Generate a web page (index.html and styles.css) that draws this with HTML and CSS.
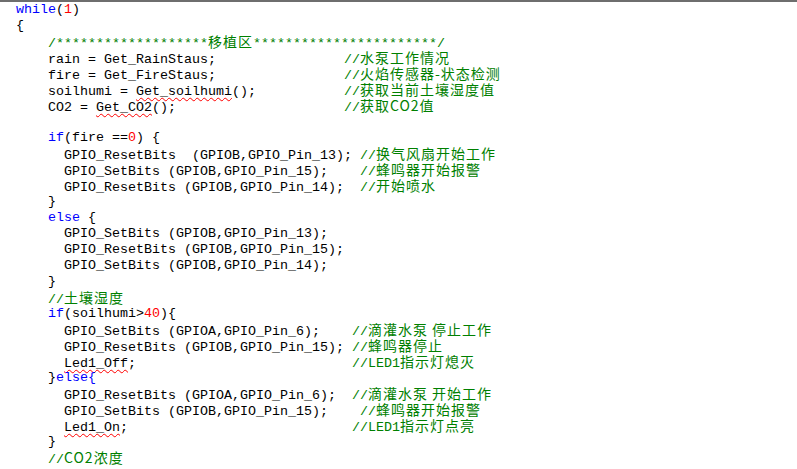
FILE: index.html
```html
<!DOCTYPE html>
<html lang="zh-CN">
<head>
  <meta charset="UTF-8">
  <meta name="viewport" content="width=device-width, initial-scale=1.0">
  <title>main.c</title>
  <link rel="stylesheet" href="styles.css">
</head>
<body>
  <div class="editor">
    <div class="line"><span class="kw">while</span>(<span class="num">1</span>)</div>
    <div class="line">{</div>
    <div class="line"><span class="cm">    /*******************<span class="zh">移植区</span>***********************/</span></div>
    <div class="line">    rain = Get_RainStaus;                <span class="cm">//<span class="zh">水泵工作情况</span></span></div>
    <div class="line">    fire = Get_FireStaus;                <span class="cm">//<span class="zh">火焰传感器-状态检测</span></span></div>
    <div class="line">    soilhumi = <span class="err">Get_soilhumi</span>();           <span class="cm">//<span class="zh">获取当前土壤湿度值</span></span></div>
    <div class="line">    CO2 = <span class="err">Get_CO2</span>();                     <span class="cm">//<span class="zh">获取CO2值</span></span></div>
    <div class="line"> </div>
    <div class="line">    <span class="kw">if</span>(fire ==<span class="num">0</span>) {</div>
    <div class="line">      GPIO_ResetBits  (GPIOB,GPIO_Pin_13); <span class="cm">//<span class="zh">换气风扇开始工作</span></span></div>
    <div class="line">      GPIO_SetBits (GPIOB,GPIO_Pin_15);    <span class="cm">//<span class="zh">蜂鸣器开始报警</span></span></div>
    <div class="line">      GPIO_ResetBits (GPIOB,GPIO_Pin_14);  <span class="cm">//<span class="zh">开始喷水</span></span></div>
    <div class="line">    }</div>
    <div class="line">    <span class="kw">else</span> {</div>
    <div class="line">      GPIO_SetBits (GPIOB,GPIO_Pin_13);</div>
    <div class="line">      GPIO_ResetBits (GPIOB,GPIO_Pin_15);</div>
    <div class="line">      GPIO_SetBits (GPIOB,GPIO_Pin_14);</div>
    <div class="line">    }</div>
    <div class="line"><span class="cm">    //<span class="zh">土壤湿度</span></span></div>
    <div class="line">    <span class="kw">if</span>(soilhumi&gt;<span class="num">40</span>){</div>
    <div class="line">      GPIO_SetBits (GPIOA,GPIO_Pin_6);    <span class="cm">//<span class="zh">滴灌水泵 停止工作</span></span></div>
    <div class="line">      GPIO_ResetBits (GPIOB,GPIO_Pin_15); <span class="cm">//<span class="zh">蜂鸣器停止</span></span></div>
    <div class="line">      <span class="err">Led1_Off</span>;                           <span class="cm">//LED1<span class="zh">指示灯熄灭</span></span></div>
    <div class="line">    }<span class="kw">else{</span></div>
    <div class="line">      GPIO_ResetBits (GPIOA,GPIO_Pin_6);  <span class="cm">//<span class="zh">滴灌水泵 开始工作</span></span></div>
    <div class="line">      GPIO_SetBits (GPIOB,GPIO_Pin_15);    <span class="cm">//<span class="zh">蜂鸣器开始报警</span></span></div>
    <div class="line">      <span class="err">Led1_On</span>;                            <span class="cm">//LED1<span class="zh">指示灯点亮</span></span></div>
    <div class="line">    }</div>
    <div class="line"><span class="cm">    //<span class="zh">CO2浓度</span></span></div>
  </div>
</body>
</html>
```
FILE: styles.css
```css
* {
  margin: 0px;
  padding: 0px;
}
body {
  overflow: hidden;
  background-color: white;
  border-top: 2px solid #6e6e6e;
}
.editor {
  padding-left: 16px;
  font-family: "Liberation Mono", "Courier New", monospace;
  font-size: 13.33px;
  color: #000000;
}
.line {
  height: 16px;
  line-height: 16px;
  white-space: pre;
}
.kw {color: #0000ff;}
.num {color: #ff0000;}
.cm {color: #008000;}
.zh {
  font-family: "Noto Sans CJK SC", sans-serif;
  font-size: 14px;
  letter-spacing: 1px;
  line-height: 14px;
}
.err {
  text-decoration: underline wavy #ff0000;
  text-decoration-thickness: 1px;
  text-underline-offset: 2px;
}
```
